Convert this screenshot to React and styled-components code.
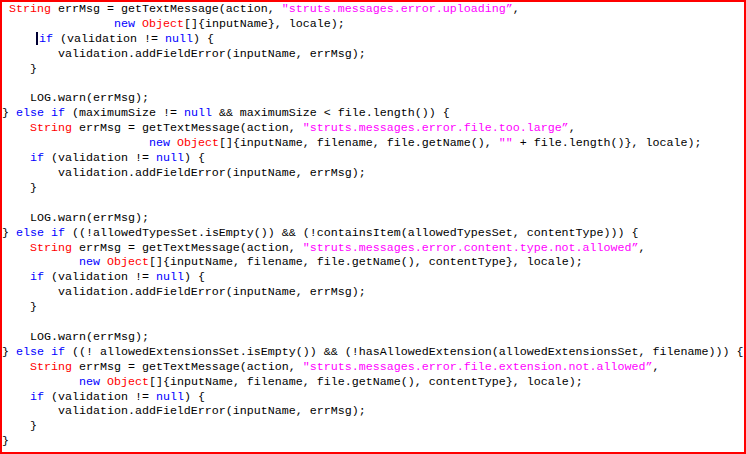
import React from 'react';
import styled, { createGlobalStyle } from 'styled-components';

const GlobalStyle = createGlobalStyle`
  html, body {
    margin: 0;
    padding: 0;
    background: #ffffff;
  }
`

const Frame = styled.div`
  box-sizing: border-box;
  width: 746px;
  height: 454px;
  border: 2px solid #ff0000;
  background: #ffffff;
  overflow: hidden;
`

const Code = styled.pre`
  margin: 0;
  padding: 0;
  font-family: "Liberation Mono", "Courier New", monospace;
  font-size: 11.67px;
  line-height: 14.92px;
  color: #000000;
  white-space: pre;
`

const Line = styled.div`
  height: 14.92px;
`

const Keyword = styled.span`
  color: #0000ff;
`

const TypeName = styled.span`
  color: #ff0000;
`

const Str = styled.span`
  color: #ff00ff;
`

const Caret = styled.span`
  display: inline-block;
  width: 0;
  height: 13px;
  margin-left: -1px;
  margin-right: 1px;
  border-left: 2px solid #000033;
  vertical-align: -3px;
`

const KEYWORDS = ['if', 'else', 'null', 'new'];
const TYPES = ['String', 'Object'];

// split a line into coloured pieces
function tokenize(text) {
  const parts = [];
  const re = /("[^"”]*[”"])|\b(if|else|null|new|String|Object)\b|\|/g;
  let last = 0;
  let m;
  while ((m = re.exec(text)) !== null) {
    if (m.index > last) parts.push({ kind: 'plain', text: text.slice(last, m.index) });
    if (m[1]) parts.push({ kind: 'str', text: m[1] });
    else if (m[0] === '|') parts.push({ kind: 'caret' });
    else if (KEYWORDS.includes(m[2])) parts.push({ kind: 'kw', text: m[2] });
    else if (TYPES.includes(m[2])) parts.push({ kind: 'type', text: m[2] });
    last = re.lastIndex;
  }
  if (last < text.length) parts.push({ kind: 'plain', text: text.slice(last) });
  return parts;
}

const lines = [
  ' String errMsg = getTextMessage(action, "struts.messages.error.uploading”,',
  '                new Object[]{inputName}, locale);',
  '     |if (validation != null) {',
  '        validation.addFieldError(inputName, errMsg);',
  '    }',
  '',
  '    LOG.warn(errMsg);',
  '} else if (maximumSize != null && maximumSize < file.length()) {',
  '    String errMsg = getTextMessage(action, "struts.messages.error.file.too.large”,',
  '                     new Object[]{inputName, filename, file.getName(), "" + file.length()}, locale);',
  '    if (validation != null) {',
  '        validation.addFieldError(inputName, errMsg);',
  '    }',
  '',
  '    LOG.warn(errMsg);',
  '} else if ((!allowedTypesSet.isEmpty()) && (!containsItem(allowedTypesSet, contentType))) {',
  '    String errMsg = getTextMessage(action, "struts.messages.error.content.type.not.allowed”,',
  '           new Object[]{inputName, filename, file.getName(), contentType}, locale);',
  '    if (validation != null) {',
  '        validation.addFieldError(inputName, errMsg);',
  '    }',
  '',
  '    LOG.warn(errMsg);',
  '} else if ((! allowedExtensionsSet.isEmpty()) && (!hasAllowedExtension(allowedExtensionsSet, filename))) {',
  '    String errMsg = getTextMessage(action, "struts.messages.error.file.extension.not.allowed”,',
  '           new Object[]{inputName, filename, file.getName(), contentType}, locale);',
  '    if (validation != null) {',
  '        validation.addFieldError(inputName, errMsg);',
  '    }',
  '}',
];

function renderPart(part, i) {
  switch (part.kind) {
    case 'kw':
      return <Keyword key={i}>{part.text}</Keyword>;
    case 'type':
      return <TypeName key={i}>{part.text}</TypeName>;
    case 'str':
      return <Str key={i}>{part.text}</Str>;
    case 'caret':
      return <Caret key={i} />;
    default:
      return <React.Fragment key={i}>{part.text}</React.Fragment>;
  }
}

export default function App() {
  return (
    <>
      <GlobalStyle />
      <Frame>
        <Code>
          {lines.map((text, i) => (
            <Line key={i}>{text === '' ? ' ' : tokenize(text).map(renderPart)}</Line>
          ))}
        </Code>
      </Frame>
    </>
  );
}
